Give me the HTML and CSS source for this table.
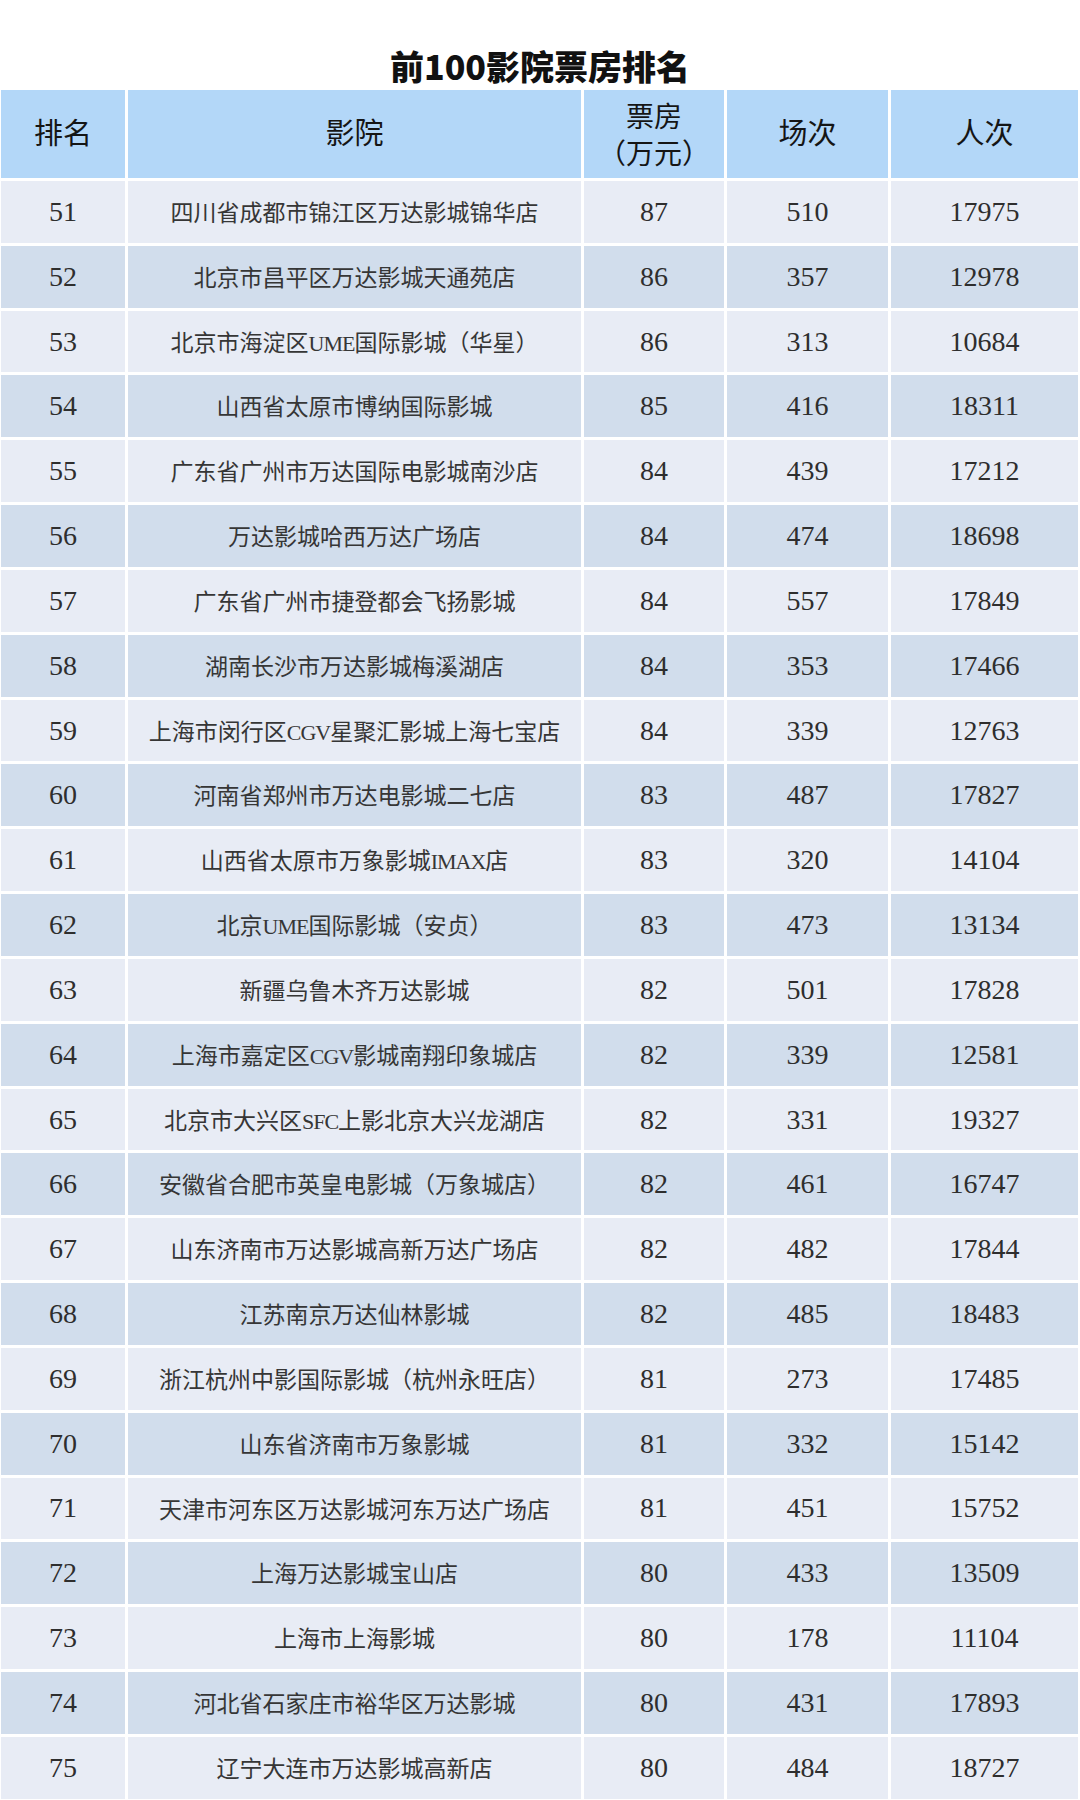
FILE: index.html
```html
<!DOCTYPE html>
<html lang="zh-CN">
<head>
<meta charset="utf-8">
<title>前100影院票房排名</title>
<link rel="stylesheet" href="styles.css">
</head>
<body>
<div class="page">
  <h1 class="title">前100影院票房排名</h1>
  <div class="table">
    <div class="row head">
      <div class="cell">排名</div>
      <div class="cell">影院</div>
      <div class="cell two"><span>票房</span><span>（万元）</span></div>
      <div class="cell">场次</div>
      <div class="cell">人次</div>
    </div>
    <div class="row odd"><div class="cell num">51</div><div class="cell name">四川省成都市锦江区万达影城锦华店</div><div class="cell num">87</div><div class="cell num">510</div><div class="cell num">17975</div></div>
    <div class="row even"><div class="cell num">52</div><div class="cell name">北京市昌平区万达影城天通苑店</div><div class="cell num">86</div><div class="cell num">357</div><div class="cell num">12978</div></div>
    <div class="row odd"><div class="cell num">53</div><div class="cell name">北京市海淀区<span class="lat">UME</span>国际影城（华星）</div><div class="cell num">86</div><div class="cell num">313</div><div class="cell num">10684</div></div>
    <div class="row even"><div class="cell num">54</div><div class="cell name">山西省太原市博纳国际影城</div><div class="cell num">85</div><div class="cell num">416</div><div class="cell num">18311</div></div>
    <div class="row odd"><div class="cell num">55</div><div class="cell name">广东省广州市万达国际电影城南沙店</div><div class="cell num">84</div><div class="cell num">439</div><div class="cell num">17212</div></div>
    <div class="row even"><div class="cell num">56</div><div class="cell name">万达影城哈西万达广场店</div><div class="cell num">84</div><div class="cell num">474</div><div class="cell num">18698</div></div>
    <div class="row odd"><div class="cell num">57</div><div class="cell name">广东省广州市捷登都会飞扬影城</div><div class="cell num">84</div><div class="cell num">557</div><div class="cell num">17849</div></div>
    <div class="row even"><div class="cell num">58</div><div class="cell name">湖南长沙市万达影城梅溪湖店</div><div class="cell num">84</div><div class="cell num">353</div><div class="cell num">17466</div></div>
    <div class="row odd"><div class="cell num">59</div><div class="cell name">上海市闵行区<span class="lat">CGV</span>星聚汇影城上海七宝店</div><div class="cell num">84</div><div class="cell num">339</div><div class="cell num">12763</div></div>
    <div class="row even"><div class="cell num">60</div><div class="cell name">河南省郑州市万达电影城二七店</div><div class="cell num">83</div><div class="cell num">487</div><div class="cell num">17827</div></div>
    <div class="row odd"><div class="cell num">61</div><div class="cell name">山西省太原市万象影城<span class="lat">IMAX</span>店</div><div class="cell num">83</div><div class="cell num">320</div><div class="cell num">14104</div></div>
    <div class="row even"><div class="cell num">62</div><div class="cell name">北京<span class="lat">UME</span>国际影城（安贞）</div><div class="cell num">83</div><div class="cell num">473</div><div class="cell num">13134</div></div>
    <div class="row odd"><div class="cell num">63</div><div class="cell name">新疆乌鲁木齐万达影城</div><div class="cell num">82</div><div class="cell num">501</div><div class="cell num">17828</div></div>
    <div class="row even"><div class="cell num">64</div><div class="cell name">上海市嘉定区<span class="lat">CGV</span>影城南翔印象城店</div><div class="cell num">82</div><div class="cell num">339</div><div class="cell num">12581</div></div>
    <div class="row odd"><div class="cell num">65</div><div class="cell name">北京市大兴区<span class="lat">SFC</span>上影北京大兴龙湖店</div><div class="cell num">82</div><div class="cell num">331</div><div class="cell num">19327</div></div>
    <div class="row even"><div class="cell num">66</div><div class="cell name">安徽省合肥市英皇电影城（万象城店）</div><div class="cell num">82</div><div class="cell num">461</div><div class="cell num">16747</div></div>
    <div class="row odd"><div class="cell num">67</div><div class="cell name">山东济南市万达影城高新万达广场店</div><div class="cell num">82</div><div class="cell num">482</div><div class="cell num">17844</div></div>
    <div class="row even"><div class="cell num">68</div><div class="cell name">江苏南京万达仙林影城</div><div class="cell num">82</div><div class="cell num">485</div><div class="cell num">18483</div></div>
    <div class="row odd"><div class="cell num">69</div><div class="cell name">浙江杭州中影国际影城（杭州永旺店）</div><div class="cell num">81</div><div class="cell num">273</div><div class="cell num">17485</div></div>
    <div class="row even"><div class="cell num">70</div><div class="cell name">山东省济南市万象影城</div><div class="cell num">81</div><div class="cell num">332</div><div class="cell num">15142</div></div>
    <div class="row odd"><div class="cell num">71</div><div class="cell name">天津市河东区万达影城河东万达广场店</div><div class="cell num">81</div><div class="cell num">451</div><div class="cell num">15752</div></div>
    <div class="row even"><div class="cell num">72</div><div class="cell name">上海万达影城宝山店</div><div class="cell num">80</div><div class="cell num">433</div><div class="cell num">13509</div></div>
    <div class="row odd"><div class="cell num">73</div><div class="cell name">上海市上海影城</div><div class="cell num">80</div><div class="cell num">178</div><div class="cell num">11104</div></div>
    <div class="row even"><div class="cell num">74</div><div class="cell name">河北省石家庄市裕华区万达影城</div><div class="cell num">80</div><div class="cell num">431</div><div class="cell num">17893</div></div>
    <div class="row odd"><div class="cell num">75</div><div class="cell name">辽宁大连市万达影城高新店</div><div class="cell num">80</div><div class="cell num">484</div><div class="cell num">18727</div></div>
  </div>
</div>
</body>
</html>
```
FILE: styles.css
```css
html, body {
  margin: 0;
  padding: 0;
  background: #ffffff;
}
.page {
  width: 1080px;
  height: 1800px;
  overflow: hidden;
  background: #ffffff;
}
.title {
  margin: 0;
  box-sizing: border-box;
  height: 90px;
  padding-top: 46px;
  line-height: 40px;
  text-align: center;
  font-family: "Noto Sans CJK SC", "Noto Sans", sans-serif;
  font-weight: 900;
  font-size: 34px;
  letter-spacing: 0;
  color: #111111;
}
.table {
  display: flex;
  flex-direction: column;
  row-gap: 3px;
  padding-left: 1px;
}
.row {
  display: grid;
  grid-template-columns: 124px 453px 140px 161px 187px;
  column-gap: 3px;
  height: 61.83px;
}
.row.head {
  height: 88px;
}
.cell {
  display: flex;
  align-items: center;
  justify-content: center;
  text-align: center;
  font-family: "Liberation Serif", "Noto Sans CJK SC", serif;
  color: #2e2e2e;
}
.head .cell {
  background: #b3d7f8;
  font-size: 29px;
  color: #151515;
  line-height: 37px;
}
.head .cell.two {
  flex-direction: column;
  font-size: 28px;
  padding-top: 4px;
  box-sizing: border-box;
}
.odd .cell {
  background: #e8ecf5;
}
.even .cell {
  background: #d1ddec;
}
.cell.num {
  font-size: 28px;
}
.cell.name {
  display: block;
  box-sizing: border-box;
  padding-top: 4px;
  line-height: 57.83px;
  font-size: 23px;
  color: #363636;
  white-space: nowrap;
}
.lat {
  font-family: "Liberation Serif", serif;
  font-size: 22px;
  letter-spacing: -1px;
}
```
